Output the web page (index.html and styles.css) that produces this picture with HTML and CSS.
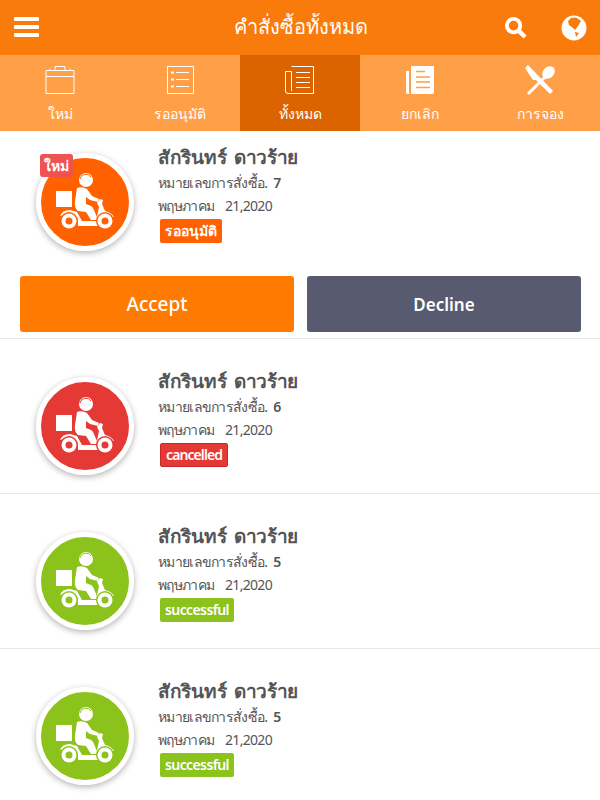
FILE: index.html
```html
<!DOCTYPE html>
<html lang="th">
<head>
  <meta charset="UTF-8">
  <meta name="viewport" content="width=device-width, initial-scale=1.0">
  <title>คำสั่งซื้อทั้งหมด</title>
  <link rel="stylesheet" href="styles.css">
</head>
<body>
  <svg class="sprite" width="0" height="0">
    <symbol id="rider" viewBox="0 0 96 96">
      <circle cx="50" cy="25" r="7" fill="#fff"/>
      <path d="M44 24A6 6 0 0 1 55 22" fill="none" stroke="currentColor"/>
      <rect x="20" y="36" width="16" height="16" fill="#fff"/>
      <!-- rider -->
      <path fill="#fff" d="M41 33Q46 31 51 34L56 41L63 44L62 47L54 45L50 42L50 49L55 51Q57 52 58 55L62 65L55 65L50 57L42 56Q38 53 39 46Z"/>
      <!-- scooter -->
      <path fill="#fff" d="M24 61Q26 55 34 55L41 57L46 66L60 66L63 52L61 48L64 44L67 45L66 49L69 56Q75 57 78 62L70 61Q64 62 62 71L42 71Q43 60 33 59Z"/>
      <circle cx="33" cy="66" r="9" fill="currentColor"/>
      <circle cx="33" cy="66" r="7.500" fill="#fff"/>
      <circle cx="33" cy="66" r="3.500" fill="currentColor"/>
      <circle cx="69" cy="66" r="9" fill="currentColor"/>
      <circle cx="69" cy="66" r="7.500" fill="#fff"/>
      <circle cx="69" cy="66" r="3.500" fill="currentColor"/>
    </symbol>
  </svg>

  <header class="topbar">
    <div class="burger"><span></span><span></span><span></span></div>
    <h1 class="title">คำสั่งซื้อทั้งหมด</h1>
    <div class="top-icons">
      <svg class="icon-search" viewBox="0 0 24 24">
        <circle cx="10" cy="10" r="7" fill="none" stroke="#fff" stroke-width="4"/>
        <path d="M15 15L22 22" stroke="#fff" stroke-width="4.500"/>
      </svg>
      <svg class="icon-globe" viewBox="0 0 26 26">
        <circle cx="13" cy="13" r="12.500" fill="#fff"/>
        <path fill="#f97b0b" d="M10 3L15 2.500L20 6L17 11L14 15L12 13L8 10L7 6ZM14 17L18 18L15 22Z"/>
      </svg>
    </div>
  </header>

  <nav class="tabs">
    <a class="tab">
      <svg class="tab-icon" viewBox="0 0 32 30" fill="none" stroke="#fff">
        <path d="M2 5.500H30V28.500H2ZM2 11.500H30M11 5V1.500H21V5M6 5V3.500M26 5V3.500"/>
      </svg>
      <span>ใหม่</span>
    </a>
    <a class="tab">
      <svg class="tab-icon" viewBox="0 0 32 30" fill="none" stroke="#fff">
        <path d="M3.500 1.500H29.500V28.500H3.500ZM12 7.500H25M12 14.500H25M12 21.500H25"/>
        <path d="M7 7.500H10M7 14.500H10M7 21.500H10" stroke-width="2"/>
      </svg>
      <span>รออนุมัติ</span>
    </a>
    <a class="tab active">
      <svg class="tab-icon" viewBox="0 0 32 30" fill="none" stroke="#fff">
        <path d="M7.500 1.500H29.500V28.500H4Q1.500 28.500 1.500 26V6.500H7.500M7.500 6.500V26"/>
        <path d="M12 7.500H26M12 12.500H26M12 17.500H26M12 22.500H26"/>
      </svg>
      <span>ทั้งหมด</span>
    </a>
    <a class="tab">
      <svg class="tab-icon" viewBox="0 0 32 30">
        <path fill="#fff" d="M7 1H30V27Q30 29 28 29H7ZM2 6H5V29H4Q2 29 2 27Z"/>
        <path stroke="#ff9f47" stroke-width="1.500" d="M12 6.500H21M12 12H26M12 17H26M12 22.500H26"/>
      </svg>
      <span>ยกเลิก</span>
    </a>
    <a class="tab">
      <svg class="tab-icon" viewBox="0 0 32 30">
        <path stroke="#fff" stroke-width="3" d="M4 29L21 12"/>
        <ellipse cx="24.500" cy="7.500" rx="5.500" ry="7" transform="rotate(45 24.500 7.500)" fill="#fff"/>
        <path fill="#fff" d="M1 3L4 0L29 26L26 29L12 15L9 15Z"/>
      </svg>
      <span>การจอง</span>
    </a>
  </nav>

  <main class="orders">
    <section class="order order-first">
      <div class="order-main">
        <div class="avatar orange">
          <span class="new-badge">ใหม่</span>
          <svg class="rider"><use href="#rider"/></svg>
        </div>
        <div class="info">
          <h2 class="name">สักรินทร์ ดาวร้าย</h2>
          <p class="line">หมายเลขการสั่งซื้อ. <b>7</b></p>
          <p class="line date">พฤษภาคม 21,2020</p>
          <span class="status orange">รออนุมัติ</span>
        </div>
      </div>
      <div class="actions">
        <button class="btn btn-accept">Accept</button>
        <button class="btn btn-decline">Decline</button>
      </div>
    </section>

    <section class="order">
      <div class="order-main">
        <div class="avatar red"><svg class="rider"><use href="#rider"/></svg></div>
        <div class="info">
          <h2 class="name">สักรินทร์ ดาวร้าย</h2>
          <p class="line">หมายเลขการสั่งซื้อ. <b>6</b></p>
          <p class="line date">พฤษภาคม 21,2020</p>
          <span class="status red">cancelled</span>
        </div>
      </div>
    </section>

    <section class="order">
      <div class="order-main">
        <div class="avatar green"><svg class="rider"><use href="#rider"/></svg></div>
        <div class="info">
          <h2 class="name">สักรินทร์ ดาวร้าย</h2>
          <p class="line">หมายเลขการสั่งซื้อ. <b>5</b></p>
          <p class="line date">พฤษภาคม 21,2020</p>
          <span class="status green">successful</span>
        </div>
      </div>
    </section>

    <section class="order">
      <div class="order-main">
        <div class="avatar green"><svg class="rider"><use href="#rider"/></svg></div>
        <div class="info">
          <h2 class="name">สักรินทร์ ดาวร้าย</h2>
          <p class="line">หมายเลขการสั่งซื้อ. <b>5</b></p>
          <p class="line date">พฤษภาคม 21,2020</p>
          <span class="status green">successful</span>
        </div>
      </div>
    </section>
  </main>
</body>
</html>
```

FILE: styles.css
```css
/* General */
html, body {
  height: 800px;
  overflow: hidden;
}

body {
  margin: 0;
  font-family: 'Noto Sans', 'Open Sans', sans-serif;
  background: #fff;
  color: #555;
}

.sprite {
  position: absolute;
}

/* Top bar */
.topbar {
  display: grid;
  grid-template-columns: 1fr auto 1fr;
  align-items: center;
  height: 55px;
  padding: 0 13px 0 14px;
  box-sizing: border-box;
  background: #f97b0b;
  color: #fff;
}

.burger {
  display: flex;
  flex-direction: column;
  gap: 4px;
  width: 25px;
  margin-top: -1px;
}

.burger span {
  height: 4px;
  border-radius: 1px;
  background: #fff;
}

.title {
  margin: -2px 0 0;
  text-align: center;
  font-size: 20px;
  font-weight: 400;
}

.top-icons {
  display: flex;
  justify-content: flex-end;
  align-items: center;
  gap: 34px;
}

.icon-search {
  width: 23px;
  height: 23px;
}

.icon-globe {
  width: 26px;
  height: 26px;
}

/* Tabs */
.tabs {
  display: grid;
  grid-template-columns: repeat(5, 1fr);
  height: 76px;
  background: #ff9f47;
}

.tab {
  display: flex;
  flex-direction: column;
  align-items: center;
  padding-top: 10px;
  box-sizing: border-box;
  color: #fff;
  font-size: 14px;
}

.tab.active {
  background: #dc6400;
}

.tab-icon {
  width: 32px;
  height: 30px;
  margin-bottom: 8px;
}

/* Order rows */
.order {
  padding-top: 28px;
  height: 155px;
  box-sizing: border-box;
  border-bottom: 1px solid #e8e8e8;
}

.order-first {
  padding-top: 12px;
  height: 208px;
}

.order-main {
  display: flex;
  padding-left: 36px;
  height: 104px;
}

.avatar {
  position: relative;
  flex: none;
  width: 98px;
  height: 98px;
  margin-right: 24px;
  margin-top: 10px;
  border: 5px solid #fff;
  border-radius: 50%;
  box-sizing: border-box;
  box-shadow: 0 2px 6px rgba(0, 0, 0, 0.3);
}

.avatar.orange { background: #ff6000; color: #ff6000; }
.avatar.red { background: #e53935; color: #e53935; }
.avatar.green { background: #8cc21c; color: #8cc21c; }

.rider {
  position: absolute;
  top: -3px;
  left: -5px;
  width: 96px;
  height: 96px;
}

.new-badge {
  position: absolute;
  top: -4px;
  left: -1px;
  z-index: 1;
  padding: 0 4px;
  border-radius: 3px;
  background: #ef5350;
  color: #fff;
  font-size: 14px;
  font-weight: 700;
  line-height: 23px;
}

.info {
  min-width: 0;
}

.name {
  margin: 0;
  font-size: 19px;
  font-weight: 600;
  letter-spacing: -0.3px;
  line-height: 28px;
  word-spacing: 3px;
}

.line {
  margin: 0;
  font-size: 14px;
  letter-spacing: -0.7px;
  line-height: 23px;
  word-spacing: 3px;
}

.line.date {
  word-spacing: 8px;
}

.line b {
  font-weight: 600;
}

.status {
  display: inline-block;
  margin: 2px 0 0 2px;
  padding: 0 5px;
  border-radius: 2px;
  color: #fff;
  font-size: 14px;
  font-weight: 600;
  letter-spacing: -0.9px;
  line-height: 24px;
}

.status.orange { background: #ff6000; letter-spacing: 0; }
.status.red { background: #e53935; border: 1px solid #c62828; line-height: 22px; }
.status.green { background: #8cc21c; letter-spacing: -0.6px; }

/* Buttons */
.actions {
  display: flex;
  gap: 13px;
  margin-top: 29px;
  padding: 0 19px 0 20px;
}

.btn {
  flex: 1;
  height: 56px;
  border: none;
  border-radius: 3px;
  color: #fff;
  font-family: inherit;
  font-size: 19px;
  font-weight: 500;
}

.btn-accept {
  background: #ff7a00;
}

.btn-decline {
  background: #585b70;
  font-size: 17px;
  font-weight: 600;
}
```
